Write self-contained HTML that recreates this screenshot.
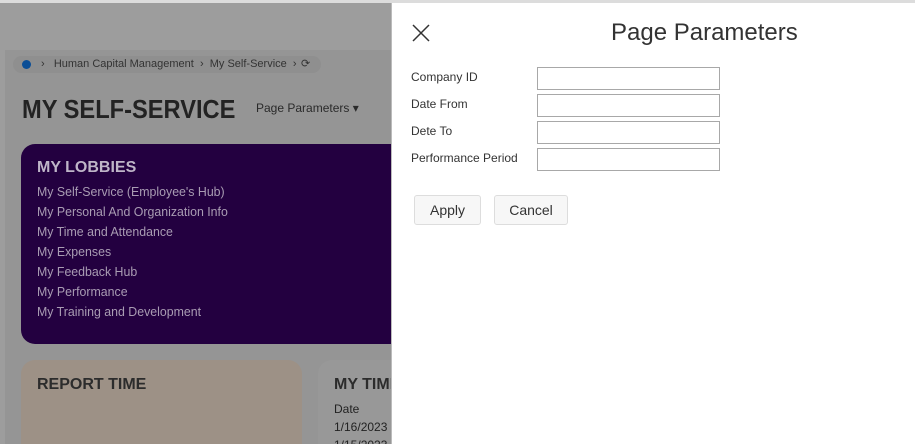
<!DOCTYPE html>
<html><head><style>
*{margin:0;padding:0;box-sizing:border-box}
html,body{width:915px;height:444px;overflow:hidden}
body{position:relative;background:#9d9d9d;font-family:"Liberation Sans","DejaVu Sans",sans-serif}
.topline{position:absolute;left:0;top:0;width:915px;height:3px;background:#dcdcdc}
.main{position:absolute;left:5px;top:50px;width:400px;height:394px;background:#959595}
.crumb{position:absolute;left:13px;top:56px;width:308px;height:17px;border-radius:9px;background:#8f8f8f;font-size:11px;color:#333;line-height:17px}
.dot{position:absolute;left:9px;top:4px;width:9px;height:9px;border-radius:50%;background:#0b4e96}
h1{position:absolute;left:22px;top:94px;font-size:26px;font-weight:bold;color:#232323;transform:scaleX(0.91);transform-origin:left top;white-space:nowrap}
.pp{position:absolute;left:256px;top:101px;font-size:12px;color:#2a2a2a}
.lob{position:absolute;left:21px;top:144px;width:380px;height:200px;background:#230040;border-radius:14px 0 0 14px;color:#a99cb3}
.lob h2{position:absolute;left:16px;top:15px;font-size:16px;color:#bfb5c8}
.lob div{position:absolute;left:16px;font-size:13px;transform:scaleX(0.95);transform-origin:left}
.rep{position:absolute;left:21px;top:360px;width:281px;height:90px;background:#9d9186;border-radius:14px 14px 0 0}
.rep h3,.tim h3{position:absolute;left:16px;top:16px;font-size:16px;color:#2c2c2c}
.tim{position:absolute;left:318px;top:360px;width:73px;height:90px;background:#989898;border-radius:14px 0 0 0;overflow:hidden}
.tim div{position:absolute;left:16px;font-size:12px;color:#222;white-space:nowrap}
.tim h3{white-space:nowrap}
.panel{position:absolute;left:391px;top:3px;width:524px;height:441px;background:#fff;border-left:1px solid #bbb}
.title{position:absolute;left:219px;top:16px;font-size:24px;color:#333}
.lbl{position:absolute;left:19px;font-size:12px;color:#333}
.inp{position:absolute;left:145px;width:183px;height:23px;border:1px solid #a8a8a8}
.btn{position:absolute;top:192px;height:30px;border:1px solid #ddd;border-radius:3px;background:#f7f7f7;font-size:14px;color:#333;text-align:center;line-height:28px}
</style></head><body>
<div class="topline"></div>
<div class="main"></div>
<div class="crumb"><span class="dot"></span><span style="position:absolute;left:28px">›&nbsp;&nbsp; Human Capital Management &nbsp;›&nbsp; My Self-Service &nbsp;›</span><span style="position:absolute;left:288px">⟳</span></div>
<h1>MY SELF-SERVICE</h1>
<div class="pp">Page Parameters ▾</div>
<div class="lob"><h2>MY LOBBIES</h2>
<div style="top:40px">My Self-Service (Employee's Hub)</div>
<div style="top:60px">My Personal And Organization Info</div>
<div style="top:80px">My Time and Attendance</div>
<div style="top:100px">My Expenses</div>
<div style="top:120px">My Feedback Hub</div>
<div style="top:140px">My Performance</div>
<div style="top:160px">My Training and Development</div>
</div>
<div class="rep"><h3>REPORT TIME</h3></div>
<div class="tim"><h3>MY TIME</h3><div style="top:42px">Date</div><div style="top:60px">1/16/2023</div><div style="top:78px">1/15/2023</div></div>
<div class="panel">
<svg style="position:absolute;left:20px;top:21px" width="18" height="18"><path d="M1 1L17 17M17 1L1 17" stroke="#333" stroke-width="1.5"/></svg>
<div class="title">Page Parameters</div>
<div class="lbl" style="top:67px">Company ID</div><div class="inp" style="top:64px"></div>
<div class="lbl" style="top:94px">Date From</div><div class="inp" style="top:91px"></div>
<div class="lbl" style="top:121px">Dete To</div><div class="inp" style="top:118px"></div>
<div class="lbl" style="top:148px">Performance Period</div><div class="inp" style="top:145px"></div>
<div class="btn" style="left:22px;width:67px">Apply</div>
<div class="btn" style="left:102px;width:74px">Cancel</div>
</div>
</body></html>
